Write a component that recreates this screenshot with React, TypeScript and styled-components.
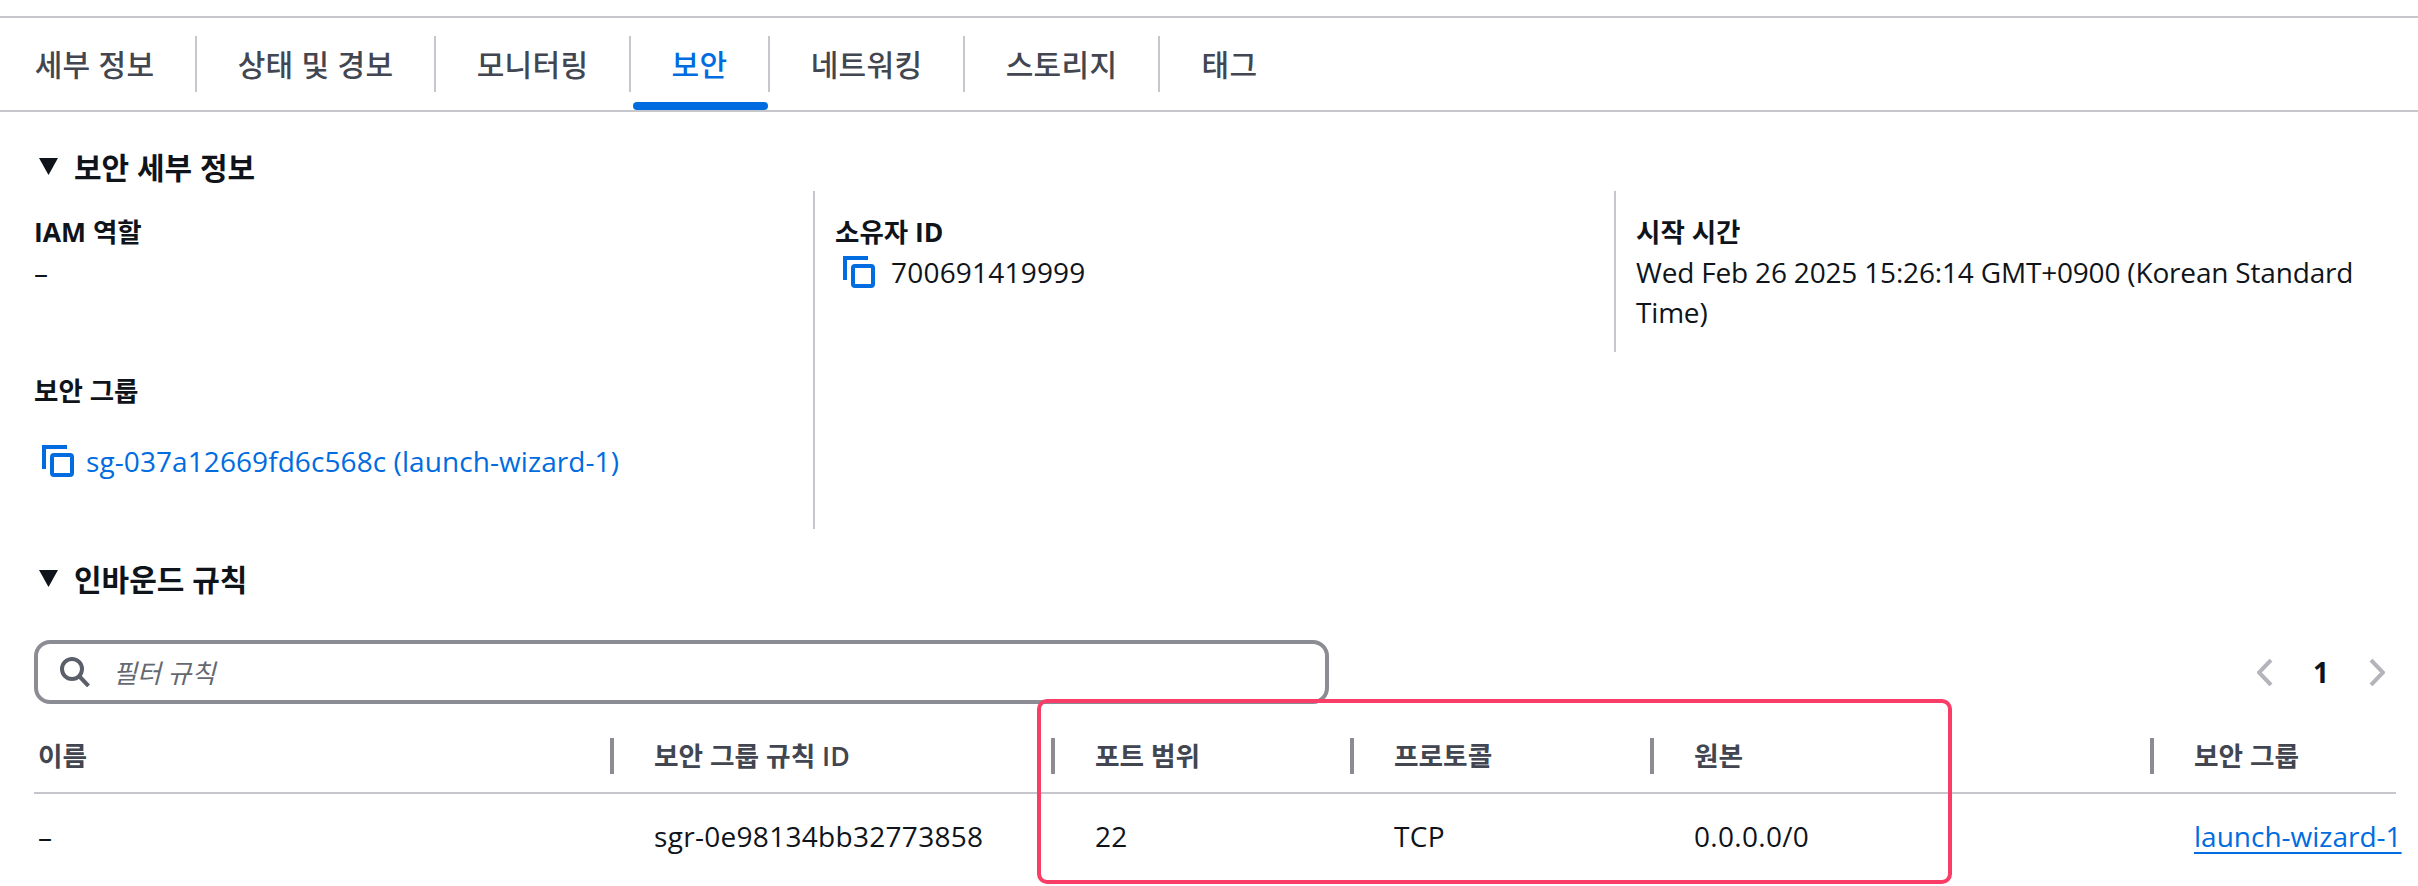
import { createGlobalStyle, styled } from 'styled-components'

const GlobalStyle = createGlobalStyle`
	html, body {
		margin: 0;
		padding: 0;
		background: #ffffff;
	}
	body {
		font-family: "Open Sans", "Noto Sans CJK KR", sans-serif;
		font-size: 28px;
		color: #0f141a;
	}
`

const Page = styled.div`
	position: relative;
	width: 2418px;
	height: 886px;
	overflow: hidden;
	padding-top: 16px;
	box-sizing: border-box;
`

const TabBar = styled.div`
	display: flex;
	align-items: flex-start;
	height: 74px;
	padding-top: 18px;
	border-top: 2px solid #c6c6cd;
	border-bottom: 2px solid #c6c6cd;
`

const Tab = styled.div<{ $active?: boolean; $width: number }>`
	position: relative;
	width: ${(p) => p.$width}px;
	height: 56px;
	box-sizing: border-box;
	padding-bottom: 2px;
	display: flex;
	align-items: center;
	justify-content: center;
	font-size: 30px;
	font-weight: 500;
	letter-spacing: 0.3px;
	color: ${(p) => (p.$active ? '#006ce0' : '#424650')};
	border-right: 2px solid #c6c6cd;

	&:first-child {
		padding-right: 6px;
	}

	&:last-child {
		border-right: none;
	}

	${(p) =>
		p.$active &&
		`
		&::after {
			content: '';
			position: absolute;
			left: 2px;
			right: 0;
			top: 66px;
			height: 8px;
			border-radius: 4px;
			background: #006ce0;
		}
	`}
`

const SectionHeading = styled.div<{ $top: number }>`
	display: flex;
	align-items: center;
	gap: 16px;
	height: 40px;
	margin-top: ${(p) => p.$top}px;
	padding-left: 39px;
	font-size: 30px;
	font-weight: 700;
	color: #0f141a;
`

const Caret = () => (
	<svg width="19" height="17" viewBox="0 0 19 17">
		<path d="M0 0H19L9.5 17Z" fill="#0f141a" />
	</svg>
)

const DetailGrid = styled.div`
	display: grid;
	grid-template-columns: 779px 801px 1fr;
	margin: 5px 0 0 34px;
	height: 338px;
`

const DetailColumn = styled.div<{ $divider?: boolean; $short?: boolean }>`
	display: flex;
	flex-direction: column;
	height: ${(p) => (p.$short ? '161px' : '338px')};
	padding-top: 21px;
	box-sizing: border-box;
	${(p) => p.$divider && 'border-left: 2px solid #c6c6cd; padding-left: 20px;'}
`

const Label = styled.div<{ $top?: number }>`
	font-size: 26.5px;
	font-weight: 700;
	line-height: 40px;
	margin-top: ${(p) => p.$top || 0}px;
`

const Value = styled.div`
	font-size: 28px;
	line-height: 40px;
	letter-spacing: -0.18px;
	color: #0f141a;
	max-width: 760px;
`

const CopyRow = styled.div<{ $top: number; $gap: number }>`
	display: flex;
	align-items: center;
	gap: ${(p) => p.$gap}px;
	margin-top: ${(p) => p.$top}px;
	padding-left: 8px;
	height: 40px;
	font-size: 28px;
	letter-spacing: 0.2px;
`

const BlueLink = styled.span`
	color: #006ce0;
	letter-spacing: 0.08px;
`

const CopyIcon = () => (
	<svg width="32" height="32" viewBox="0 0 32 32" fill="none" stroke="#006ce0" strokeWidth="4">
		<path d="M2 24V2H25" />
		<rect x="10" y="10" width="20" height="20" rx="2" />
	</svg>
)

const FilterRow = styled.div`
	display: flex;
	justify-content: space-between;
	align-items: center;
	margin: 42px 0 0 34px;
`

const FilterBox = styled.div`
	display: flex;
	align-items: center;
	gap: 23px;
	width: 1295px;
	height: 64px;
	box-sizing: border-box;
	padding-left: 22px;
	border: 4px solid #8c8c94;
	border-radius: 16px;
`

const Placeholder = styled.span`
	font-size: 26px;
	font-style: italic;
	color: #656871;
`

const Pager = styled.div`
	display: flex;
	align-items: center;
	gap: 40px;
	padding-right: 33px;
	font-size: 28px;
	font-weight: 700;
`

const Chevron = ({ right }: { right?: boolean }) => (
	<svg width="16" height="27" viewBox="0 0 16 27" fill="none" stroke="#b4b4bb" strokeWidth="4">
		<path d={right ? 'M2 1L14 13.5L2 26' : 'M14 1L2 13.5L14 26'} />
	</svg>
)

const Table = styled.div`
	margin: 34px 22px 0 34px;
`

const TableRow = styled.div<{ $head?: boolean }>`
	display: grid;
	grid-template-columns: 576px 441px 299px 300px 500px 1fr;
	height: ${(p) => (p.$head ? '54px' : '84px')};
	align-items: ${(p) => (p.$head ? 'start' : 'center')};
	${(p) => p.$head && 'border-bottom: 2px solid #c6c6cd; color: #424650;'}
`

const HeadCell = styled.div<{ $first?: boolean }>`
	height: 36px;
	line-height: 36px;
	font-size: 26.7px;
	font-weight: 600;
	padding-left: ${(p) => (p.$first ? '4px' : '40px')};
	${(p) => !p.$first && 'border-left: 4px solid #8c8c94;'}
`

const BodyCell = styled.div<{ $first?: boolean }>`
	font-size: 28px;
	letter-spacing: 0.3px;
	padding-left: ${(p) => (p.$first ? '4px' : '44px')};
	white-space: nowrap;
`

const UnderLink = styled.span`
	color: #006ce0;
	letter-spacing: 0;
	text-decoration: underline;
	text-underline-offset: 5px;
	text-decoration-thickness: 2px;
`

const Highlight = styled.div`
	position: absolute;
	left: 1037px;
	top: 699px;
	width: 915px;
	height: 185px;
	box-sizing: border-box;
	border: 4px solid #f93d66;
	border-radius: 10px;
	pointer-events: none;
`

const tabs = [
	{ label: '세부 정보', width: 197 },
	{ label: '상태 및 경보', width: 239 },
	{ label: '모니터링', width: 195 },
	{ label: '보안', width: 139, active: true },
	{ label: '네트워킹', width: 195 },
	{ label: '스토리지', width: 195 },
	{ label: '태그', width: 139 },
]

const heads = ['이름', '보안 그룹 규칙 ID', '포트 범위', '프로토콜', '원본', '보안 그룹']

export default function App() {
	return (
		<Page>
			<GlobalStyle />
			<TabBar>
				{tabs.map((t) => (
					<Tab key={t.label} $active={t.active} $width={t.width}>
						{t.label}
					</Tab>
				))}
			</TabBar>

			<SectionHeading $top={34}>
				<Caret />
				보안 세부 정보
			</SectionHeading>

			<DetailGrid>
				<DetailColumn>
					<Label>IAM 역할</Label>
					<Value>–</Value>
					<Label $top={79}>보안 그룹</Label>
					<CopyRow $top={30} $gap={12}>
						<CopyIcon />
						<BlueLink>sg-037a12669fd6c568c (launch-wizard-1)</BlueLink>
					</CopyRow>
				</DetailColumn>
				<DetailColumn $divider>
					<Label>소유자 ID</Label>
					<CopyRow $top={0} $gap={16}>
						<CopyIcon />
						700691419999
					</CopyRow>
				</DetailColumn>
				<DetailColumn $divider $short>
					<Label>시작 시간</Label>
					<Value>Wed Feb 26 2025 15:26:14 GMT+0900 (Korean Standard Time)</Value>
				</DetailColumn>
			</DetailGrid>

			<SectionHeading $top={29}>
				<Caret />
				인바운드 규칙
			</SectionHeading>

			<FilterRow>
				<FilterBox>
					<svg width="30" height="30" viewBox="0 0 30 30" fill="none" stroke="#5b5f6b" strokeWidth="4">
						<circle cx="12" cy="12" r="10" />
						<path d="M19 19L28.5 29" />
					</svg>
					<Placeholder>필터 규칙</Placeholder>
				</FilterBox>
				<Pager>
					<Chevron />
					1
					<Chevron right />
				</Pager>
			</FilterRow>

			<Table>
				<TableRow $head>
					{heads.map((h, i) => (
						<HeadCell key={h} $first={i === 0}>
							{h}
						</HeadCell>
					))}
				</TableRow>
				<TableRow>
					<BodyCell $first>–</BodyCell>
					<BodyCell>sgr-0e98134bb32773858</BodyCell>
					<BodyCell>22</BodyCell>
					<BodyCell>TCP</BodyCell>
					<BodyCell>0.0.0.0/0</BodyCell>
					<BodyCell>
						<UnderLink>launch-wizard-1</UnderLink>
					</BodyCell>
				</TableRow>
			</Table>

			<Highlight />
		</Page>
	)
}
